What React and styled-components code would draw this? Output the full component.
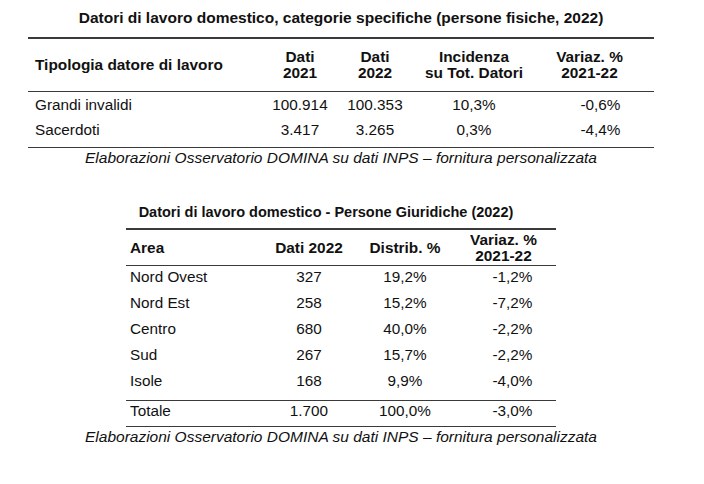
import styled, { createGlobalStyle } from "styled-components"

const GlobalStyle = createGlobalStyle`
body {
    margin: 0;
    background: #fff;
    font-family: "Liberation Sans", Arial, sans-serif;
    color: #111;
}
`

const Page = styled.div`
width: 704px;
height: 484px;
padding-right: 22px;
box-sizing: border-box;
display: flex;
flex-direction: column;
align-items: center;
`

const Section = styled.div`
display: flex;
flex-direction: column;
align-items: center;
margin-top: ${props => props.top}px;
`

const Title = styled.div`
font-weight: bold;
font-size: ${props => props.size || 15.5}px;
line-height: 20px;
margin-bottom: ${props => props.gap}px;
padding-right: ${props => props.shift || 0}px;
white-space: nowrap;
`

const Table = styled.table`
border-collapse: collapse;
table-layout: fixed;
width: ${props => props.width}px;
border-top: 2px solid #3a3a3a;
border-bottom: 1.5px solid #3a3a3a;
font-size: 15.3px;
`

const HeadCell = styled.th`
font-weight: bold;
font-size: 15.4px;
line-height: 16px;
height: ${props => props.h}px;
padding: 0;
text-align: ${props => props.align || "center"};
padding-left: ${props => props.pl || 0}px;
padding-right: ${props => props.pr || 0}px;
border-bottom: 1.5px solid #3a3a3a;
vertical-align: middle;
white-space: nowrap;
`

const Row = styled.tr`
border-top: ${props => props.ruled ? "1.5px solid #3a3a3a" : "none"};
`

const Cell = styled.td`
padding: 0;
height: ${props => props.h}px;
padding-bottom: ${props => props.pb || 0}px;
line-height: 18px;
text-align: ${props => props.align || "center"};
padding-left: ${props => props.pl || 0}px;
padding-right: ${props => props.pr || 0}px;
vertical-align: middle;
white-space: nowrap;
`

const Caption = styled.div`
font-style: italic;
font-size: 15.5px;
line-height: 20px;
white-space: nowrap;
`

const fisiche = [
    ["Grandi invalidi", "100.914", "100.353", "10,3%", "-0,6%"],
    ["Sacerdoti", "3.417", "3.265", "0,3%", "-4,4%"],
]

const giuridiche = [
    ["Nord Ovest", "327", "19,2%", "-1,2%"],
    ["Nord Est", "258", "15,2%", "-7,2%"],
    ["Centro", "680", "40,0%", "-2,2%"],
    ["Sud", "267", "15,7%", "-2,2%"],
    ["Isole", "168", "9,9%", "-4,0%"],
]

const source = "Elaborazioni Osservatorio DOMINA su dati INPS \u2013 fornitura personalizzata"

export default function App() {
    return <>
        <GlobalStyle />
        <Page>
            <Section top={8}>
                <Title gap={9}>Datori di lavoro domestico, categorie specifiche (persone fisiche, 2022)</Title>
                <Table width={626}>
                    <colgroup>
                        <col style={{ width: 235 }} />
                        <col style={{ width: 74 }} />
                        <col style={{ width: 76 }} />
                        <col style={{ width: 122 }} />
                        <col style={{ width: 119 }} />
                    </colgroup>
                    <thead>
                        <tr>
                            <HeadCell h={52} align="left" pl={7}>Tipologia datore di lavoro</HeadCell>
                            <HeadCell h={52}>Dati<br />2021</HeadCell>
                            <HeadCell h={52}>Dati<br />2022</HeadCell>
                            <HeadCell h={52}>Incidenza<br />su Tot. Datori</HeadCell>
                            <HeadCell h={52} pr={10}>Variaz. %<br />2021-22</HeadCell>
                        </tr>
                    </thead>
                    <tbody>
                        {fisiche.map((r, i) => {
                            const pb = i === fisiche.length - 1 ? 5 : 0
                            return (
                                <tr key={r[0]}>
                                    <Cell h={25} pb={pb} align="left" pl={7}>{r[0]}</Cell>
                                    <Cell h={25} pb={pb}>{r[1]}</Cell>
                                    <Cell h={25} pb={pb}>{r[2]}</Cell>
                                    <Cell h={25} pb={pb}>{r[3]}</Cell>
                                    <Cell h={25} pb={pb} pl={12}>{r[4]}</Cell>
                                </tr>
                            )
                        })}
                    </tbody>
                </Table>
                <Caption>{source}</Caption>
            </Section>

            <Section top={34}>
                <Title gap={6} shift={30} size={14.5}>Datori di lavoro domestico - Persone Giuridiche (2022)</Title>
                <Table width={430}>
                    <colgroup>
                        <col style={{ width: 143 }} />
                        <col style={{ width: 80 }} />
                        <col style={{ width: 112 }} />
                        <col style={{ width: 95 }} />
                    </colgroup>
                    <thead>
                        <tr>
                            <HeadCell h={35} align="left" pl={4}>Area</HeadCell>
                            <HeadCell h={35}>Dati 2022</HeadCell>
                            <HeadCell h={35}>Distrib. %</HeadCell>
                            <HeadCell h={35} pr={10}>Variaz. %<br />2021-22</HeadCell>
                        </tr>
                    </thead>
                    <tbody>
                        {giuridiche.map((r, i) => {
                            const pb = i === giuridiche.length - 1 ? 8 : 4
                            return (
                                <tr key={r[0]}>
                                    <Cell h={22} pb={pb} align="left" pl={4}>{r[0]}</Cell>
                                    <Cell h={22} pb={pb}>{r[1]}</Cell>
                                    <Cell h={22} pb={pb}>{r[2]}</Cell>
                                    <Cell h={22} pb={pb} pl={8}>{r[3]}</Cell>
                                </tr>
                            )
                        })}
                        <Row ruled>
                            <Cell h={20} pb={5} align="left" pl={4}>Totale</Cell>
                            <Cell h={20} pb={5}>1.700</Cell>
                            <Cell h={20} pb={5}>100,0%</Cell>
                            <Cell h={20} pb={5} pl={8}>-3,0%</Cell>
                        </Row>
                    </tbody>
                </Table>
                <Caption>{source}</Caption>
            </Section>
        </Page>
    </>
}
